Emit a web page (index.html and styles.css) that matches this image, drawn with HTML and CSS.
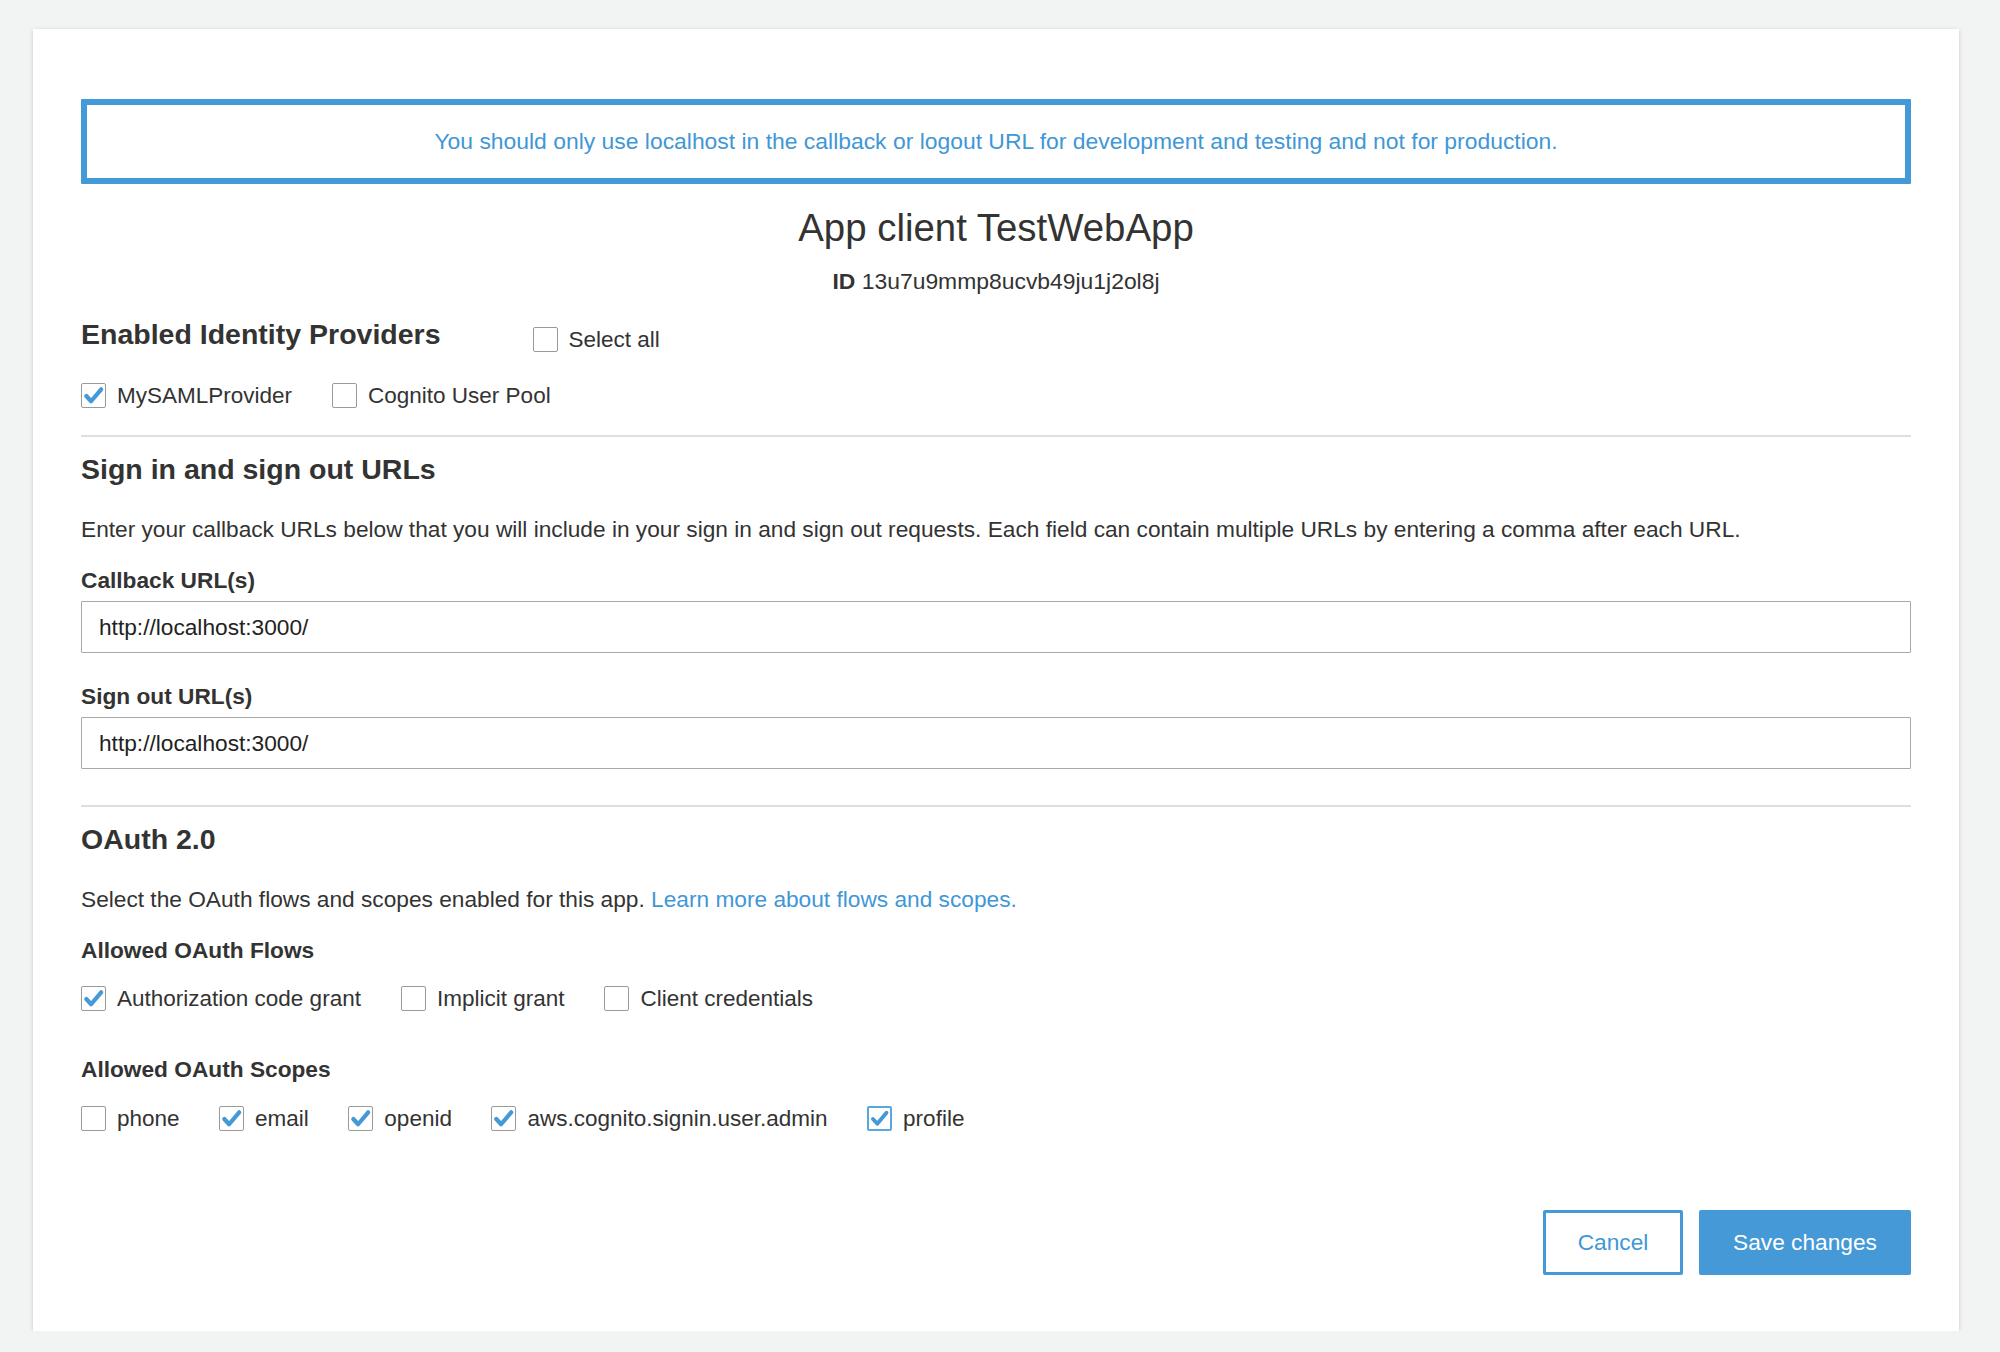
FILE: index.html
```html
<!DOCTYPE html>
<html>
<head>
<meta charset="utf-8">
<link rel="stylesheet" href="styles.css">
</head>
<body>
<div class="card">
  <div class="alert">You should only use localhost in the callback or logout URL for development and testing and not for production.</div>

  <h1 class="title">App client TestWebApp</h1>
  <div class="client-id"><b>ID</b> 13u7u9mmp8ucvb49ju1j2ol8j</div>

  <div class="provider-head">
    <h2 class="section-title">Enabled Identity Providers</h2>
    <label class="check select-all"><span class="box"></span><span>Select all</span></label>
  </div>
  <div class="check-row providers">
    <label class="check"><span class="box on"><svg viewBox="0 0 24 24"><polyline points="4.5,12.5 9.5,18 20,5.5"/></svg></span><span>MySAMLProvider</span></label>
    <label class="check"><span class="box"></span><span>Cognito User Pool</span></label>
  </div>

  <hr class="divider">

  <h2 class="section-title urls-title">Sign in and sign out URLs</h2>
  <p class="desc">Enter your callback URLs below that you will include in your sign in and sign out requests. Each field can contain multiple URLs by entering a comma after each URL.</p>

  <div class="field-label first">Callback URL(s)</div>
  <div class="input">http://localhost:3000/</div>
  <div class="field-label">Sign out URL(s)</div>
  <div class="input">http://localhost:3000/</div>

  <hr class="divider second">

  <h2 class="section-title oauth-title">OAuth 2.0</h2>
  <p class="desc oauth-desc">Select the OAuth flows and scopes enabled for this app. <a class="link">Learn more about flows and scopes.</a></p>

  <div class="field-label flows-label">Allowed OAuth Flows</div>
  <div class="check-row flows">
    <label class="check"><span class="box on"><svg viewBox="0 0 24 24"><polyline points="4.5,12.5 9.5,18 20,5.5"/></svg></span><span>Authorization code grant</span></label>
    <label class="check"><span class="box"></span><span>Implicit grant</span></label>
    <label class="check"><span class="box"></span><span>Client credentials</span></label>
  </div>

  <div class="field-label scopes-label">Allowed OAuth Scopes</div>
  <div class="check-row scopes">
    <label class="check"><span class="box"></span><span>phone</span></label>
    <label class="check"><span class="box on"><svg viewBox="0 0 24 24"><polyline points="4.5,12.5 9.5,18 20,5.5"/></svg></span><span>email</span></label>
    <label class="check"><span class="box on"><svg viewBox="0 0 24 24"><polyline points="4.5,12.5 9.5,18 20,5.5"/></svg></span><span>openid</span></label>
    <label class="check"><span class="box on"><svg viewBox="0 0 24 24"><polyline points="4.5,12.5 9.5,18 20,5.5"/></svg></span><span>aws.cognito.signin.user.admin</span></label>
    <label class="check"><span class="box on focus"><svg viewBox="0 0 24 24"><polyline points="4.5,12.5 9.5,18 20,5.5"/></svg></span><span>profile</span></label>
  </div>

  <div class="actions">
    <button class="btn cancel">Cancel</button>
    <button class="btn save">Save changes</button>
  </div>
</div>
</body>
</html>
```

FILE: styles.css
```css
html, body {
  margin: 0;
  padding: 0;
  background: #f2f4f4;
}
body {
  font-family: "Liberation Sans", Arial, sans-serif;
  color: #333;
  padding: 29px 0 0 33px;
}
.card {
  width: 1926px;
  height: 1302px;
  box-sizing: border-box;
  background: #fff;
  box-shadow: 0 1px 4px rgba(0, 0, 0, 0.18);
  padding: 70px 48px 56px 48px;
  display: flex;
  flex-direction: column;
}
.alert {
  height: 85px;
  box-sizing: border-box;
  border: 6px solid #4499d6;
  border-radius: 1px;
  color: #3f97d6;
  font-size: 22.9px;
  display: flex;
  align-items: center;
  justify-content: center;
}
.title {
  margin: 21px 0 0;
  font-size: 38.4px;
  font-weight: normal;
  line-height: 46px;
  text-align: center;
  color: #333;
}
.client-id {
  margin-top: 15px;
  font-size: 22.9px;
  line-height: 30px;
  text-align: center;
}
.client-id b { font-weight: bold; }
.section-title {
  margin: 0;
  font-size: 28.5px;
  line-height: 36px;
  font-weight: bold;
  color: #333;
}
.provider-head {
  margin-top: 20px;
  display: flex;
  align-items: center;
  gap: 92px;
}
.select-all {
  padding-top: 10px;
}
.check-row {
  display: flex;
  align-items: center;
  gap: 40px;
}
.check {
  display: flex;
  align-items: center;
  gap: 11px;
  font-size: 22.5px;
  line-height: 25px;
  color: #333;
}
.box {
  width: 25px;
  height: 25px;
  box-sizing: border-box;
  border: 1.5px solid #9a9a9a;
  border-radius: 2px;
  background: #fff;
  display: flex;
  align-items: center;
  justify-content: center;
}
.box svg {
  width: 23px;
  height: 23px;
  fill: none;
  stroke: #4499d6;
  stroke-width: 4.4;
  stroke-linecap: round;
  stroke-linejoin: round;
}
.box.focus {
  border: 2px solid #5aa6de;
}
.providers { margin-top: 31px; }
.divider {
  margin: 27px 0 0;
  border: 0;
  height: 2px;
  background: #dedede;
}
.urls-title { margin-top: 14px; }
.desc {
  margin: 27px 0 0;
  font-size: 22.7px;
  line-height: 30px;
}
.link { color: #3f97d6; }
.field-label {
  font-size: 22.7px;
  line-height: 30px;
  font-weight: bold;
  margin-top: 28px;
}
.field-label.first { margin-top: 21px; }
.input {
  margin-top: 6px;
  height: 52px;
  box-sizing: border-box;
  border: 1.5px solid #a9a9a9;
  border-radius: 1px;
  padding: 0 17px;
  font-size: 22.7px;
  display: flex;
  align-items: center;
  color: #222;
}
.divider.second { margin-top: 36px; }
.oauth-title { margin-top: 14px; }
.desc.oauth-desc { margin-top: 27px; }
.flows-label { margin-top: 21px; }
.flows { margin-top: 21px; }
.scopes-label { margin-top: 43px; }
.scopes { margin-top: 22px; gap: 39.5px; }
.actions {
  margin-top: auto;
  display: flex;
  justify-content: flex-end;
  gap: 16px;
}
.btn {
  height: 65px;
  font-family: "Liberation Sans", Arial, sans-serif;
  font-size: 22.7px;
  border-radius: 2px;
  box-sizing: border-box;
  cursor: pointer;
}
.cancel {
  width: 140px;
  background: #fff;
  border: 3px solid #4499d6;
  color: #3f97d6;
}
.save {
  width: 212px;
  background: #4499d6;
  border: 0;
  color: #fff;
}
```
